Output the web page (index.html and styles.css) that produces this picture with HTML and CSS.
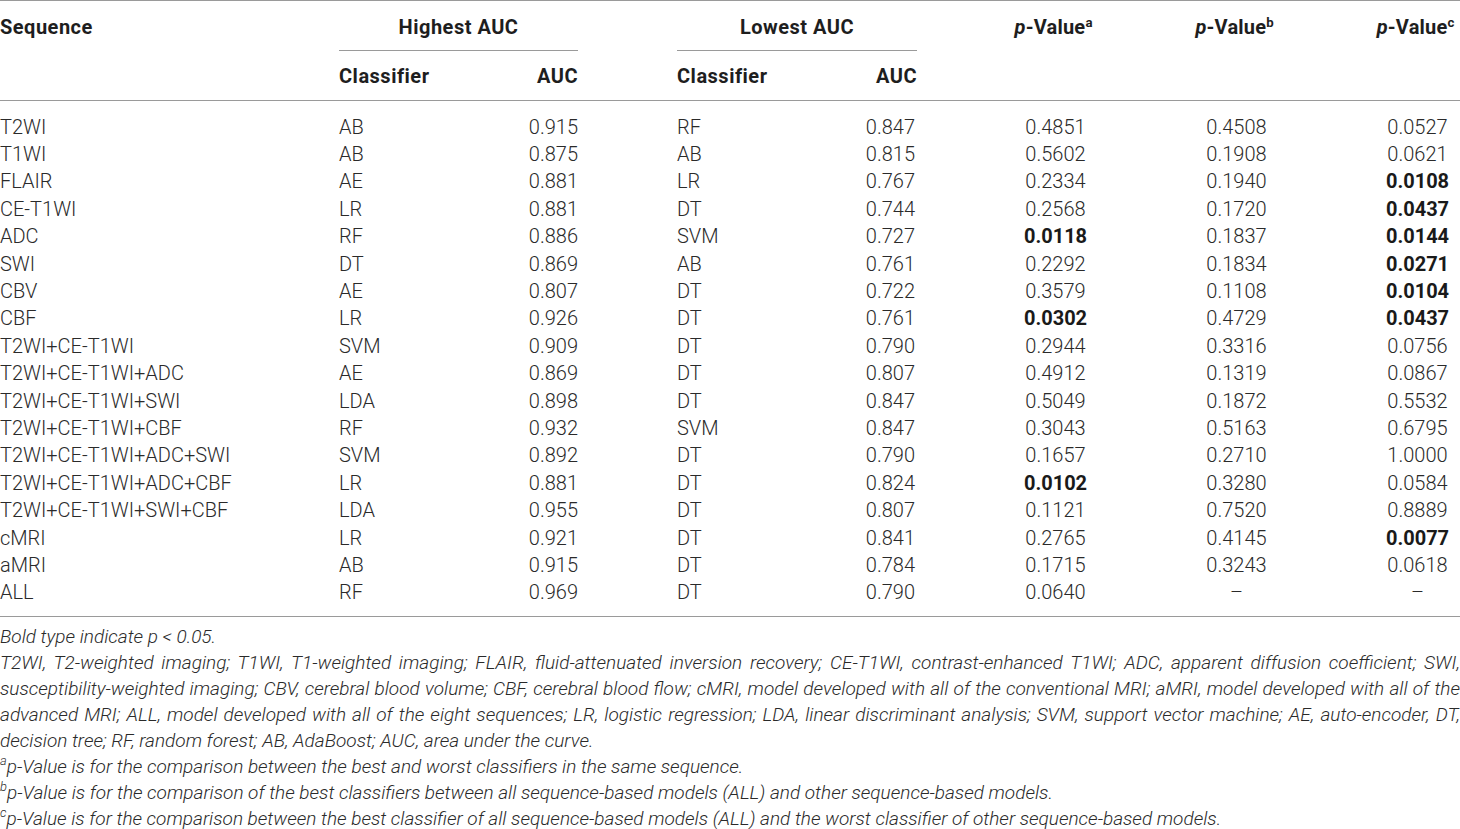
FILE: index.html
```html
<!DOCTYPE html>
<html lang="en">
  <head>
    <meta charset="UTF-8" />
    <title>Classifier AUC by sequence</title>
    <meta name="viewport" content="width=device-width, initial-scale=1.0" />
    <link rel="stylesheet" href="styles.css">
  </head>
  <body>
    <div class="wrap">
      <table class="results">
        <colgroup>
          <col class="c-seq" />
          <col class="c-cls" />
          <col class="c-auc" />
          <col class="c-gap" />
          <col class="c-cls" />
          <col class="c-auc2" />
          <col class="c-p" />
          <col class="c-p" />
          <col class="c-p" />
        </colgroup>
        <thead>
          <tr>
            <th rowspan="2" class="span-top left">Sequence</th>
            <th colspan="2" class="group">Highest AUC</th>
            <th rowspan="2" class="span-top"></th>
            <th colspan="2" class="group">Lowest AUC</th>
            <th rowspan="2" class="span-top pv"><i>p</i>-Value<sup>a</sup></th>
            <th rowspan="2" class="span-top pv"><i>p</i>-Value<sup>b</sup></th>
            <th rowspan="2" class="span-top pv"><i>p</i>-Value<sup>c</sup></th>
          </tr>
          <tr>
            <th class="sub left">Classifier</th>
            <th class="sub right">AUC</th>
            <th class="sub left">Classifier</th>
            <th class="sub right r2">AUC</th>
          </tr>
        </thead>
        <tbody>
          <tr><td>T2WI</td><td>AB</td><td class="num">0.915</td><td></td><td>RF</td><td class="num r2">0.847</td><td class="pv">0.4851</td><td class="pv">0.4508</td><td class="pv">0.0527</td></tr>
          <tr><td>T1WI</td><td>AB</td><td class="num">0.875</td><td></td><td>AB</td><td class="num r2">0.815</td><td class="pv">0.5602</td><td class="pv">0.1908</td><td class="pv">0.0621</td></tr>
          <tr><td>FLAIR</td><td>AE</td><td class="num">0.881</td><td></td><td>LR</td><td class="num r2">0.767</td><td class="pv">0.2334</td><td class="pv">0.1940</td><td class="pv"><b>0.0108</b></td></tr>
          <tr><td>CE-T1WI</td><td>LR</td><td class="num">0.881</td><td></td><td>DT</td><td class="num r2">0.744</td><td class="pv">0.2568</td><td class="pv">0.1720</td><td class="pv"><b>0.0437</b></td></tr>
          <tr><td>ADC</td><td>RF</td><td class="num">0.886</td><td></td><td>SVM</td><td class="num r2">0.727</td><td class="pv"><b>0.0118</b></td><td class="pv">0.1837</td><td class="pv"><b>0.0144</b></td></tr>
          <tr><td>SWI</td><td>DT</td><td class="num">0.869</td><td></td><td>AB</td><td class="num r2">0.761</td><td class="pv">0.2292</td><td class="pv">0.1834</td><td class="pv"><b>0.0271</b></td></tr>
          <tr><td>CBV</td><td>AE</td><td class="num">0.807</td><td></td><td>DT</td><td class="num r2">0.722</td><td class="pv">0.3579</td><td class="pv">0.1108</td><td class="pv"><b>0.0104</b></td></tr>
          <tr><td>CBF</td><td>LR</td><td class="num">0.926</td><td></td><td>DT</td><td class="num r2">0.761</td><td class="pv"><b>0.0302</b></td><td class="pv">0.4729</td><td class="pv"><b>0.0437</b></td></tr>
          <tr><td>T2WI+CE-T1WI</td><td>SVM</td><td class="num">0.909</td><td></td><td>DT</td><td class="num r2">0.790</td><td class="pv">0.2944</td><td class="pv">0.3316</td><td class="pv">0.0756</td></tr>
          <tr><td>T2WI+CE-T1WI+ADC</td><td>AE</td><td class="num">0.869</td><td></td><td>DT</td><td class="num r2">0.807</td><td class="pv">0.4912</td><td class="pv">0.1319</td><td class="pv">0.0867</td></tr>
          <tr><td>T2WI+CE-T1WI+SWI</td><td>LDA</td><td class="num">0.898</td><td></td><td>DT</td><td class="num r2">0.847</td><td class="pv">0.5049</td><td class="pv">0.1872</td><td class="pv">0.5532</td></tr>
          <tr><td>T2WI+CE-T1WI+CBF</td><td>RF</td><td class="num">0.932</td><td></td><td>SVM</td><td class="num r2">0.847</td><td class="pv">0.3043</td><td class="pv">0.5163</td><td class="pv">0.6795</td></tr>
          <tr><td>T2WI+CE-T1WI+ADC+SWI</td><td>SVM</td><td class="num">0.892</td><td></td><td>DT</td><td class="num r2">0.790</td><td class="pv">0.1657</td><td class="pv">0.2710</td><td class="pv">1.0000</td></tr>
          <tr><td>T2WI+CE-T1WI+ADC+CBF</td><td>LR</td><td class="num">0.881</td><td></td><td>DT</td><td class="num r2">0.824</td><td class="pv"><b>0.0102</b></td><td class="pv">0.3280</td><td class="pv">0.0584</td></tr>
          <tr><td>T2WI+CE-T1WI+SWI+CBF</td><td>LDA</td><td class="num">0.955</td><td></td><td>DT</td><td class="num r2">0.807</td><td class="pv">0.1121</td><td class="pv">0.7520</td><td class="pv">0.8889</td></tr>
          <tr><td>cMRI</td><td>LR</td><td class="num">0.921</td><td></td><td>DT</td><td class="num r2">0.841</td><td class="pv">0.2765</td><td class="pv">0.4145</td><td class="pv"><b>0.0077</b></td></tr>
          <tr><td>aMRI</td><td>AB</td><td class="num">0.915</td><td></td><td>DT</td><td class="num r2">0.784</td><td class="pv">0.1715</td><td class="pv">0.3243</td><td class="pv">0.0618</td></tr>
          <tr><td>ALL</td><td>RF</td><td class="num">0.969</td><td></td><td>DT</td><td class="num r2">0.790</td><td class="pv">0.0640</td><td class="pv">–</td><td class="pv">–</td></tr>
        </tbody>
      </table>

      <div class="notes">
        <p>Bold type indicate p &lt; 0.05.</p>
        <p>
          <span class="line">T2WI, T2-weighted imaging; T1WI, T1-weighted imaging; FLAIR, fluid-attenuated inversion recovery; CE-T1WI, contrast-enhanced T1WI; ADC, apparent diffusion coefficient; SWI,</span>
          <span class="line">susceptibility-weighted imaging; CBV, cerebral blood volume; CBF, cerebral blood flow; cMRI, model developed with all of the conventional MRI; aMRI, model developed with all of the</span>
          <span class="line">advanced MRI; ALL, model developed with all of the eight sequences; LR, logistic regression; LDA, linear discriminant analysis; SVM, support vector machine; AE, auto-encoder, DT,</span>
          <span class="last">decision tree; RF, random forest; AB, AdaBoost; AUC, area under the curve.</span>
        </p>
        <p><sup>a</sup>p-Value is for the comparison between the best and worst classifiers in the same sequence.</p>
        <p><sup>b</sup>p-Value is for the comparison of the best classifiers between all sequence-based models (ALL) and other sequence-based models.</p>
        <p><sup>c</sup>p-Value is for the comparison between the best classifier of all sequence-based models (ALL) and the worst classifier of other sequence-based models.</p>
      </div>
    </div>
  </body>
</html>
```

FILE: styles.css
```css
body {
  margin: 0;
  background: #ffffff;
  font-family: 'Roboto', 'Liberation Sans', sans-serif;
  font-weight: 300;
  font-size: 20px;
  color: #2a2a2a;
}

.wrap {
  width: 1460px;
  overflow: hidden;
}

.results {
  width: 1460px;
  table-layout: fixed;
  border-collapse: separate;
  border-spacing: 0;
  border-top: 1px solid #9a9a9a;
  border-bottom: 1px solid #9a9a9a;
}

.c-seq { width: 339px; }
.c-cls { width: 151px; }
.c-auc { width: 88px; }
.c-gap { width: 99px; }
.c-auc2 { width: 89px; }
.c-p { width: 181px; }

th {
  font-weight: 700;
  color: #1e1e1e;
  line-height: 22px;
  letter-spacing: 0.5px;
  padding: 0;
  white-space: nowrap;
}

th.left { text-align: left; }
th.right { text-align: right; }

th.group {
  text-align: center;
  padding: 15px 0 12px;
  border-bottom: 1px solid #9a9a9a;
}

th.sub {
  padding: 14px 0 13px;
  border-bottom: 1px solid #9a9a9a;
}

th.span-top {
  vertical-align: top;
  padding-top: 15px;
  border-bottom: 1px solid #9a9a9a;
}

th.pv,
td.pv {
  text-align: center;
  padding-left: 96px;
}

th.pv {
  padding-left: 92px;
  letter-spacing: 0.2px;
}

th sup {
  font-size: 0.66em;
  font-weight: 700;
  line-height: 0;
  vertical-align: 0.55em;
  letter-spacing: 0;
}

td {
  height: 27.4px;
  line-height: 27.4px;
  padding: 0;
  white-space: nowrap;
}

tbody tr:first-child td {
  padding-top: 12.5px;
}

tbody tr:last-child td {
  padding-bottom: 9.5px;
}

td.num { text-align: right; }
.r2 { padding-right: 2px; }

td b {
  font-weight: 700;
  color: #1a1a1a;
}

.notes {
  margin-top: 7px;
  font-size: 19px;
  font-style: italic;
  line-height: 26px;
}

.notes p {
  margin: 0;
}

.notes .line {
  display: block;
  white-space: nowrap;
  text-align: justify;
  text-align-last: justify;
}

.notes .last {
  display: block;
}

.notes sup {
  font-size: 0.68em;
  line-height: 0;
  vertical-align: 0.6em;
}
```
